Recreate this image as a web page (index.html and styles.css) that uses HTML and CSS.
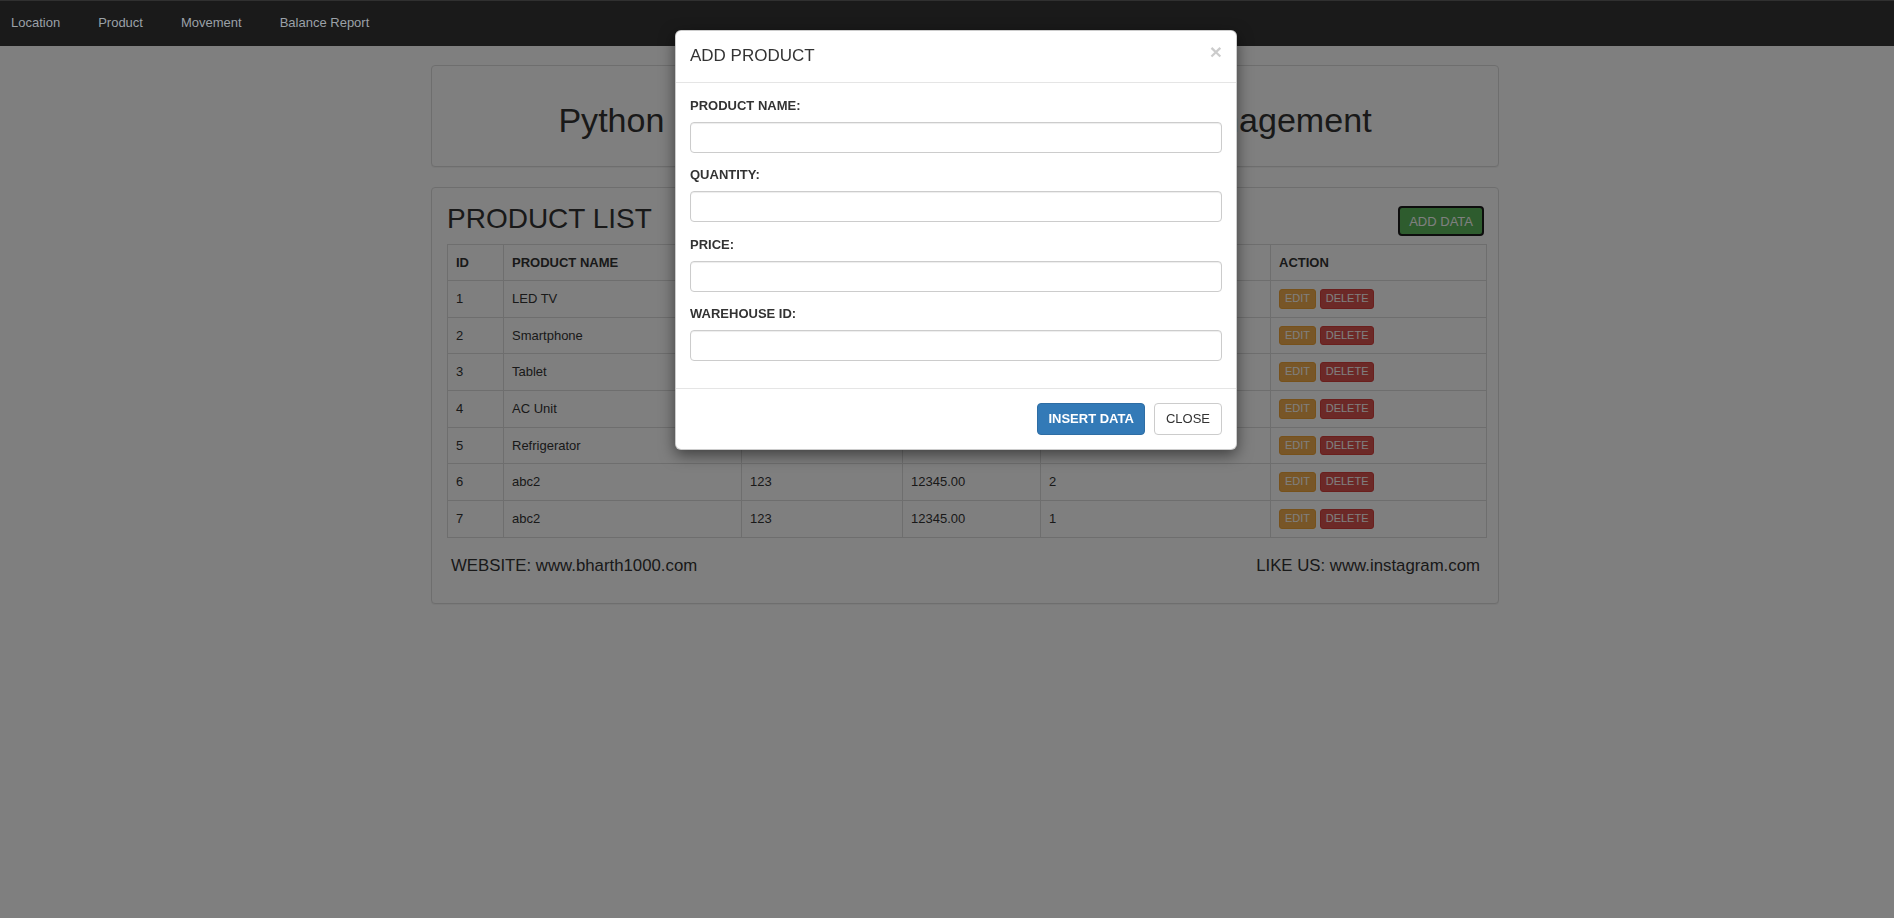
FILE: index.html
```html
<!DOCTYPE html>
<html lang="en">
<head>
<meta charset="utf-8">
<title>Product</title>
<link rel="stylesheet" href="styles.css">
</head>
<body>
<nav class="navbar">
  <ul class="nav">
    <li><a href="#">Location</a></li>
    <li><a href="#">Product</a></li>
    <li><a href="#">Movement</a></li>
    <li><a href="#">Balance Report</a></li>
  </ul>
</nav>

<main class="page">
  <section class="panel title-panel">
    <h1>Python Consumer Warehouse Inventory Management</h1>
  </section>

  <section class="panel list-panel">
    <div class="list-head">
      <h2>PRODUCT LIST</h2>
      <button class="btn btn-add">ADD DATA</button>
    </div>
    <table class="table">
      <colgroup>
        <col class="c-id"><col class="c-name"><col class="c-qty"><col class="c-price"><col class="c-wh"><col class="c-act">
      </colgroup>
      <thead>
        <tr><th>ID</th><th>PRODUCT NAME</th><th>QUANTITY</th><th>PRICE</th><th>WAREHOUSE ID</th><th>ACTION</th></tr>
      </thead>
      <tbody>
        <tr><td>1</td><td>LED TV</td><td></td><td></td><td></td><td><a class="btn-xs edit">EDIT</a> <a class="btn-xs del">DELETE</a></td></tr>
        <tr><td>2</td><td>Smartphone</td><td></td><td></td><td></td><td><a class="btn-xs edit">EDIT</a> <a class="btn-xs del">DELETE</a></td></tr>
        <tr><td>3</td><td>Tablet</td><td></td><td></td><td></td><td><a class="btn-xs edit">EDIT</a> <a class="btn-xs del">DELETE</a></td></tr>
        <tr><td>4</td><td>AC Unit</td><td></td><td></td><td></td><td><a class="btn-xs edit">EDIT</a> <a class="btn-xs del">DELETE</a></td></tr>
        <tr><td>5</td><td>Refrigerator</td><td></td><td></td><td></td><td><a class="btn-xs edit">EDIT</a> <a class="btn-xs del">DELETE</a></td></tr>
        <tr><td>6</td><td>abc2</td><td>123</td><td>12345.00</td><td>2</td><td><a class="btn-xs edit">EDIT</a> <a class="btn-xs del">DELETE</a></td></tr>
        <tr><td>7</td><td>abc2</td><td>123</td><td>12345.00</td><td>1</td><td><a class="btn-xs edit">EDIT</a> <a class="btn-xs del">DELETE</a></td></tr>
      </tbody>
    </table>
    <div class="list-foot">
      <span>WEBSITE: www.bharth1000.com</span>
      <span>LIKE US: www.instagram.com</span>
    </div>
  </section>
</main>

<div class="backdrop"></div>

<div class="modal">
  <div class="modal-header">
    <h4>ADD PRODUCT</h4>
    <span class="close">&times;</span>
  </div>
  <form class="modal-body">
    <div class="form-group">
      <label>PRODUCT NAME:</label>
      <input type="text" class="form-control">
    </div>
    <div class="form-group">
      <label>QUANTITY:</label>
      <input type="text" class="form-control">
    </div>
    <div class="form-group">
      <label>PRICE:</label>
      <input type="text" class="form-control">
    </div>
    <div class="form-group">
      <label>WAREHOUSE ID:</label>
      <input type="text" class="form-control">
    </div>
  </form>
  <div class="modal-footer">
    <button class="btn btn-primary">INSERT DATA</button>
    <button class="btn btn-default">CLOSE</button>
  </div>
</div>
</body>
</html>
```

FILE: styles.css
```css
html, body {
  margin: 0;
  padding: 0;
}

body {
  background: #fff;
  font-family: "Liberation Sans", Arial, Helvetica, sans-serif;
  font-size: 13px;
  color: #333;
  min-height: 918px;
}

/* ---------- navbar ---------- */
.navbar {
  position: relative;
  z-index: 3;
  height: 46px;
  box-sizing: border-box;
  background: #1a1a1a;
  border-top: 1px solid #303030;
  display: flex;
  align-items: center;
  padding: 0 0 2px 11px;
}

.nav {
  list-style: none;
  margin: 0;
  padding: 0;
  display: flex;
  gap: 38px;
}

.nav a {
  color: #9ba1a8;
  text-decoration: none;
  font-size: 13px;
  line-height: 20px;
}

/* ---------- page ---------- */
.page {
  width: 1068px;
  margin: 19px 0 0 431px;
}

.panel {
  background: #fff;
  border: 1px solid #ddd;
  border-radius: 4px;
  box-shadow: 0 1px 1px rgba(0, 0, 0, .05);
  box-sizing: border-box;
}

.title-panel {
  height: 102px;
  padding: 34px 15px 0;
  text-align: center;
}

.title-panel h1 {
  margin: 0;
  font-size: 34.1px;
  font-weight: 500;
  line-height: 40px;
  color: #333;
  white-space: nowrap;
}

.list-panel {
  margin-top: 20px;
  padding: 15px 14px 25px 15px;
}

.list-head {
  display: flex;
  justify-content: space-between;
  height: 33px;
  margin-bottom: 8px;
}

.list-head h2 {
  margin: 0;
  align-self: flex-start;
  font-size: 28px;
  font-weight: 500;
  line-height: 31px;
  color: #333;
}

.btn {
  font-family: inherit;
  font-size: 13px;
  cursor: pointer;
  border-radius: 4px;
}

.btn-add {
  align-self: flex-end;
  height: 30px;
  padding: 0 9px;
  background: #5cb85c;
  color: #fff;
  border: 2px solid #1a1a1a;
}

/* ---------- table ---------- */
.table {
  width: 100%;
  border-collapse: collapse;
  border: 1px solid #ddd;
  table-layout: fixed;
}

.c-id { width: 56px; }
.c-name { width: 238px; }
.c-qty { width: 161px; }
.c-price { width: 138px; }
.c-wh { width: 230px; }
.c-act { width: 216px; }

.table th,
.table td {
  border: 1px solid #ddd;
  padding: 8px;
  text-align: left;
  vertical-align: top;
  font-size: 13px;
  white-space: nowrap;
}

.table th {
  font-weight: bold;
  line-height: 19px;
}

.table td {
  height: 19.67px;
  line-height: 19.67px;
}

.btn-xs {
  display: inline-block;
  vertical-align: top;
  font-size: 11px;
  line-height: 15.67px;
  padding: 1px 5px;
  border: 1px solid transparent;
  border-radius: 3px;
  color: #fff;
  text-decoration: none;
}

.btn-xs.edit {
  background: #f0ad4e;
  border-color: #eea236;
}

.btn-xs.del {
  background: #d9534f;
  border-color: #d43f3a;
}

.list-foot {
  display: flex;
  justify-content: space-between;
  margin-top: 16px;
  padding: 0 4px;
  font-size: 16.8px;
  line-height: 24px;
  color: #333;
}

/* ---------- modal ---------- */
.backdrop {
  position: fixed;
  inset: 0;
  z-index: 2;
  background: rgba(0, 0, 0, .5);
}

.modal {
  position: fixed;
  z-index: 4;
  left: 675px;
  top: 30px;
  width: 562px;
  box-sizing: border-box;
  background: #fff;
  border: 1px solid rgba(0, 0, 0, .2);
  border-radius: 6px;
  box-shadow: 0 5px 15px rgba(0, 0, 0, .5);
}

.modal-header {
  display: flex;
  justify-content: space-between;
  padding: 14px 14px 16px;
  border-bottom: 1px solid #e5e5e5;
}

.modal-header h4 {
  margin: 0;
  font-size: 17px;
  font-weight: 500;
  line-height: 21px;
  color: #333;
}

.close {
  align-self: flex-start;
  margin-top: -4px;
  font-size: 21px;
  font-weight: bold;
  line-height: 21px;
  color: #000;
  opacity: .2;
}

.modal-body {
  display: block;
  margin: 0;
  padding: 14px 14px 14px;
}

.form-group {
  margin-bottom: 13.3px;
}

.form-group label {
  display: block;
  font-size: 13px;
  font-weight: bold;
  line-height: 18px;
  margin-bottom: 7px;
  color: #333;
}

.form-control {
  display: block;
  width: 100%;
  height: 31px;
  box-sizing: border-box;
  padding: 6px 12px;
  border: 1px solid #ccc;
  border-radius: 4px;
  box-shadow: inset 0 1px 1px rgba(0, 0, 0, .075);
  background: #fff;
  font-family: inherit;
  font-size: 13px;
}

.modal-footer {
  display: flex;
  justify-content: flex-end;
  gap: 9px;
  padding: 14px;
  border-top: 1px solid #e5e5e5;
}

.modal-footer .btn {
  height: 32px;
  line-height: 18px;
  border: 1px solid transparent;
}

.btn-primary {
  padding: 0 10px;
  background: #337ab7;
  border-color: #2e6da4 !important;
  color: #fff;
  font-weight: bold;
}

.btn-default {
  padding: 0 11px;
  background: #fff;
  border-color: #ccc !important;
  color: #333;
}
```
